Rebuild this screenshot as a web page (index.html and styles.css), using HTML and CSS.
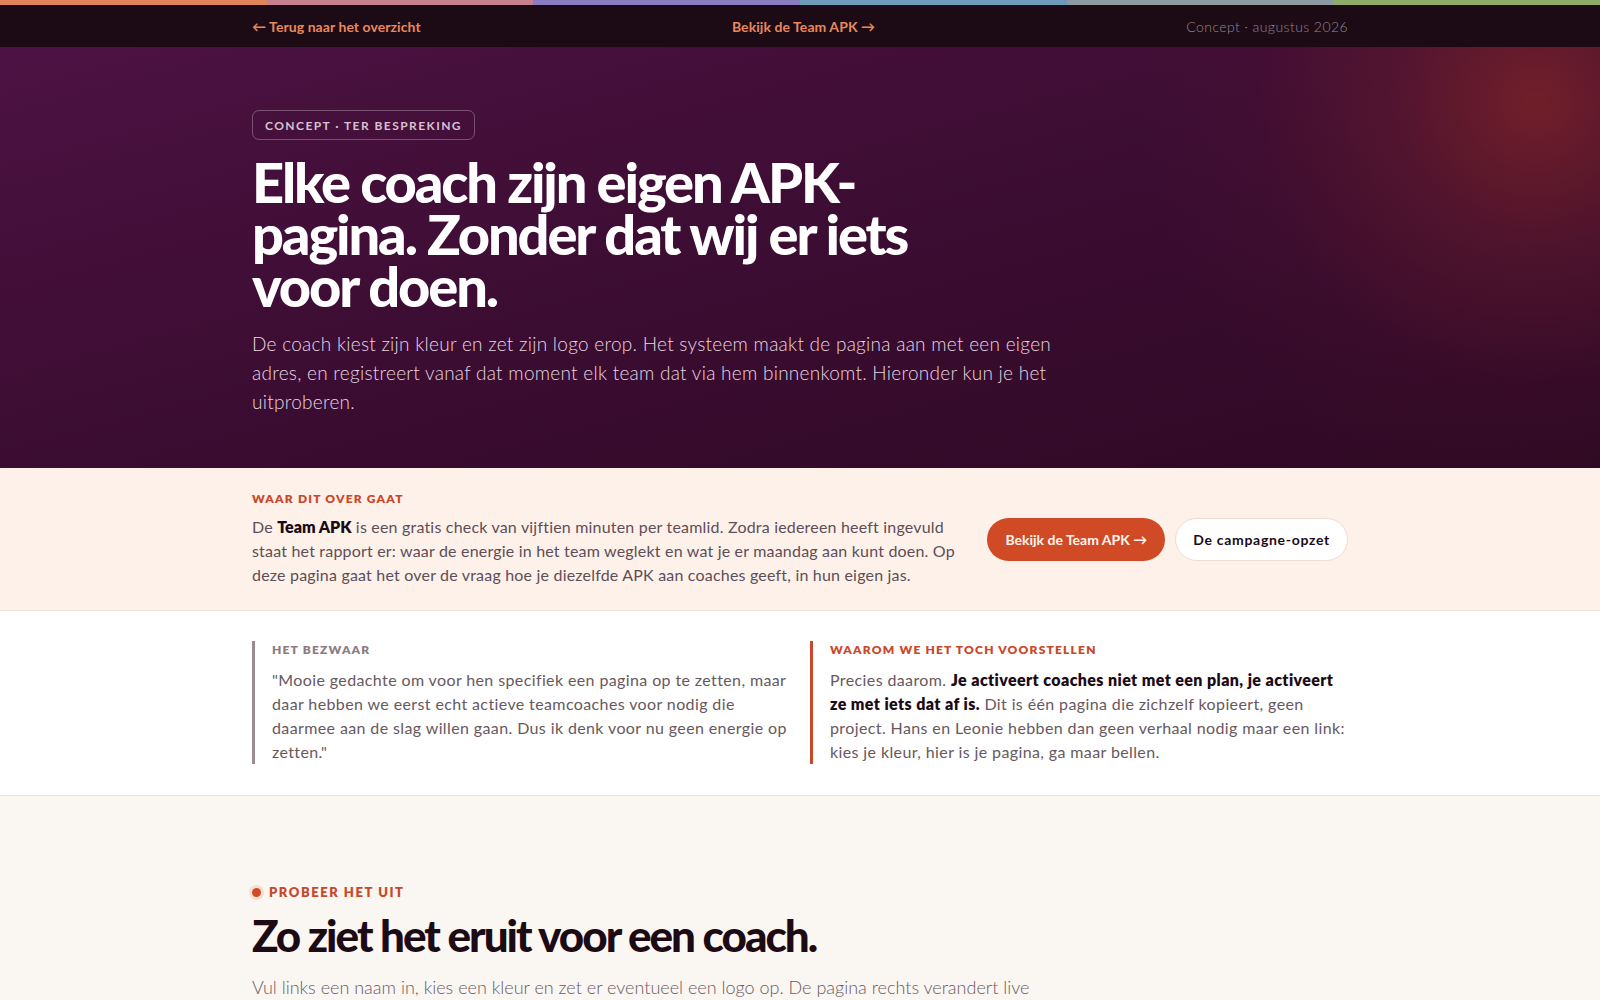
FILE: index.html
```html
<!DOCTYPE html>
<html lang="nl">
<head>
<meta charset="utf-8">
<title>Elke coach zijn eigen APK-pagina</title>
<link rel="stylesheet" href="styles.css">
</head>
<body>
<div class="stripe">
  <span class="s1"></span><span class="s2"></span><span class="s3"></span><span class="s4"></span><span class="s5"></span><span class="s6"></span>
</div>
<nav class="topnav">
  <div class="wrap topnav-inner">
    <a class="navlink" href="#">← Terug naar het overzicht</a>
    <a class="navlink" href="#">Bekijk de Team APK →</a>
    <span class="navmeta">Concept · augustus 2026</span>
  </div>
</nav>

<header class="hero">
  <div class="wrap">
    <span class="badge">CONCEPT · TER BESPREKING</span>
    <h1 class="hero-title">Elke coach zijn eigen APK-pagina. Zonder dat wij er iets voor doen.</h1>
    <p class="hero-lead">De coach kiest zijn kleur en zet zijn logo erop. Het systeem maakt de pagina aan met een eigen adres, en registreert vanaf dat moment elk team dat via hem binnenkomt. Hieronder kun je het uitproberen.</p>
  </div>
</header>

<section class="about">
  <div class="wrap about-inner">
    <div class="about-text">
      <div class="eyebrow">WAAR DIT OVER GAAT</div>
      <p>De <strong>Team APK</strong> is een gratis check van vijftien minuten per teamlid. Zodra iedereen heeft ingevuld staat het rapport er: waar de energie in het team weglekt en wat je er maandag aan kunt doen. Op deze pagina gaat het over de vraag hoe je diezelfde APK aan coaches geeft, in hun eigen jas.</p>
    </div>
    <div class="about-actions">
      <a class="btn btn-primary" href="#">Bekijk de Team APK →</a>
      <a class="btn btn-ghost" href="#">De campagne-opzet</a>
    </div>
  </div>
</section>

<section class="debate">
  <div class="wrap debate-grid">
    <div class="col col-objection">
      <div class="col-label">HET BEZWAAR</div>
      <p>"Mooie gedachte om voor hen specifiek een pagina op te zetten, maar daar hebben we eerst echt actieve teamcoaches voor nodig die daarmee aan de slag willen gaan. Dus ik denk voor nu geen energie op zetten."</p>
    </div>
    <div class="col col-answer">
      <div class="col-label">WAAROM WE HET TOCH VOORSTELLEN</div>
      <p>Precies daarom. <strong>Je activeert coaches niet met een plan, je activeert ze met iets dat af is.</strong> Dit is één pagina die zichzelf kopieert, geen project. Hans en Leonie hebben dan geen verhaal nodig maar een link: kies je kleur, hier is je pagina, ga maar bellen.</p>
    </div>
  </div>
</section>

<section class="try">
  <div class="wrap">
    <div class="try-label"><span class="dot"></span>PROBEER HET UIT</div>
    <h2 class="try-title">Zo ziet het eruit voor een coach.</h2>
    <p class="try-lead">Vul links een naam in, kies een kleur en zet er eventueel een logo op. De pagina rechts verandert live terwijl je typt, precies zoals een coach het straks zelf ziet.</p>
  </div>
</section>
</body>
</html>
```

FILE: styles.css
```css
* { box-sizing: border-box; }
html, body { margin: 0; padding: 0; }
body {
  font-family: Lato, "Liberation Sans", sans-serif;
  color: #1c0b15;
  background: #faf6f2;
  -webkit-font-smoothing: antialiased;
}
a { text-decoration: none; }

.wrap {
  width: 1096px;
  margin: 0 auto;
}

/* stripe */
.stripe { display: flex; height: 5px; }
.stripe span { flex: 1; }
.s1 { background: #df845b; }
.s2 { background: #c7808f; }
.s3 { background: #8a7dbf; }
.s4 { background: #6e9bba; }
.s5 { background: #8f99a3; }
.s6 { background: #8fab6a; }

/* top nav */
.topnav { background: #1c0b15; height: 42px; }
.topnav-inner {
  height: 42px;
  display: flex;
  justify-content: space-between;
  align-items: center;
}
.navlink {
  color: #ea885b;
  font-size: 14px;
  font-weight: 700;
  letter-spacing: 0.005em;
}
.navmeta {
  color: #958690;
  font-size: 14px;
  font-weight: 300;
  letter-spacing: 0.03em;
}

/* hero */
.hero {
  background:
    radial-gradient(circle at 96% 13%, rgba(122, 34, 40, 0.85) 0, rgba(105, 28, 45, 0.5) 140px, rgba(90, 20, 50, 0.15) 280px, rgba(90, 20, 50, 0) 400px),
    linear-gradient(165deg, #4c1243 0%, #3d0d33 45%, #2e0923 100%);
  padding: 63px 0 52px;
}
.badge {
  display: inline-block;
  border: 1px solid rgba(255, 255, 255, 0.28);
  border-radius: 7px;
  padding: 7px 12px 6px;
  color: #d7c1d1;
  font-size: 12px;
  font-weight: 700;
  letter-spacing: 0.12em;
  line-height: 15px;
}
.hero-title {
  margin: 16px 0 0;
  max-width: 700px;
  color: #ffffff;
  font-size: 56px;
  font-weight: 900;
  line-height: 52px;
  letter-spacing: -0.038em;
}
.hero-lead {
  margin: 17px 0 0;
  max-width: 820px;
  color: #e6d6e1;
  font-size: 19px;
  font-weight: 300;
  line-height: 29px;
  letter-spacing: 0.014em;
}

/* about */
.about {
  background: #fdf1ea;
  border-bottom: 1px solid #f0e1d8;
  padding: 23px 0 23px;
}
.about-inner {
  display: flex;
  align-items: center;
  gap: 32px;
}
.about-text { flex: 1; }
.eyebrow {
  color: #c9482a;
  font-size: 12px;
  font-weight: 800;
  letter-spacing: 0.1em;
  line-height: 16px;
}
.about-text p {
  margin: 8px 0 0;
  color: #5e4e57;
  font-size: 16px;
  font-weight: 400;
  line-height: 24px;
  letter-spacing: 0.012em;
}
.about-text strong { color: #1c0b15; font-weight: 800; letter-spacing: 0; }
.about-actions { display: flex; gap: 10px; }
.btn {
  display: inline-flex;
  align-items: center;
  height: 43px;
  padding: 0 18px;
  border-radius: 22px;
  font-size: 14px;
  font-weight: 700;
  white-space: nowrap;
}
.btn-primary { background: #d04a26; color: #fff4ee; }
.btn-ghost {
  background: #ffffff;
  color: #1c0b15;
  border: 1px solid #eddcd3;
  padding: 0 17px;
  letter-spacing: 0.05em;
}

/* debate */
.debate {
  background: #ffffff;
  border-bottom: 1px solid #ebe3de;
  padding: 30px 0 31px;
}
.debate-grid {
  display: grid;
  grid-template-columns: 1fr 1fr;
  gap: 20px;
}
.col { padding-left: 17px; }
.col-objection { border-left: 3px solid #9b8c92; }
.col-answer { border-left: 3px solid #c9482a; }
.col-label {
  font-size: 12px;
  font-weight: 800;
  letter-spacing: 0.1em;
  line-height: 16px;
  margin-top: 1px;
}
.col-objection .col-label { color: #8c7c83; }
.col-answer .col-label { color: #c9482a; }
.col p {
  margin: 10px 0 0;
  color: #685860;
  font-size: 16px;
  font-weight: 400;
  line-height: 24px;
  letter-spacing: 0.024em;
}
.col strong { color: #1c0b15; font-weight: 800; letter-spacing: 0.025em; }

/* try */
.try { background: #faf6f2; padding: 87px 0 40px; }
.try-label {
  display: flex;
  align-items: center;
  gap: 8px;
  color: #c9482a;
  font-size: 13px;
  font-weight: 800;
  letter-spacing: 0.12em;
  line-height: 18px;
}
.dot {
  width: 9px;
  height: 9px;
  border-radius: 50%;
  background: #d04a26;
  box-shadow: 0 0 0 3px #f6ded3;
}
.try-title {
  margin: 9px 0 0;
  color: #1c0b15;
  font-size: 44px;
  font-weight: 900;
  line-height: 50px;
  letter-spacing: -0.045em;
}
.try-lead {
  margin: 13px 0 0;
  max-width: 800px;
  color: #6a5a62;
  font-size: 18px;
  font-weight: 300;
  line-height: 28px;
  letter-spacing: 0;
}
```
